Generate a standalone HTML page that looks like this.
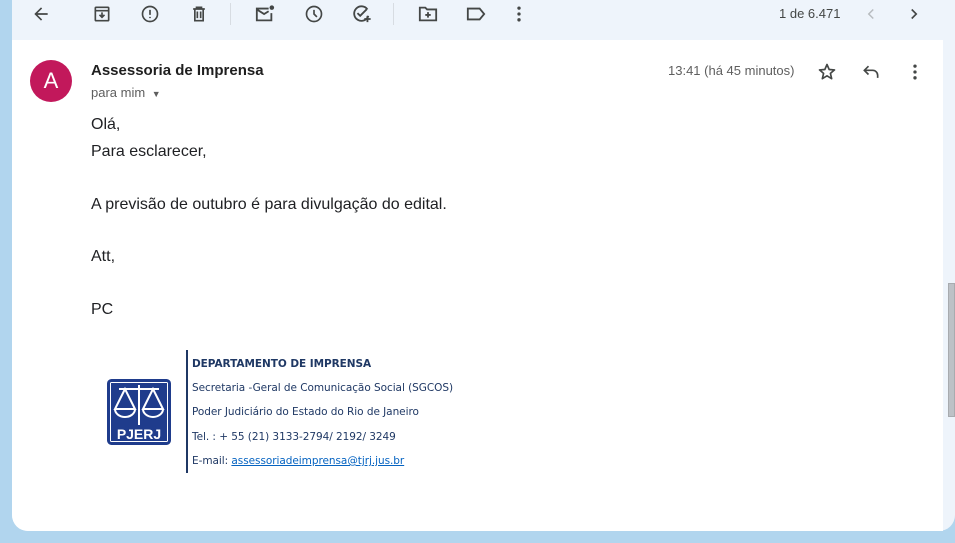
<!DOCTYPE html>
<html><head><meta charset="utf-8"><style>
*{margin:0;padding:0;box-sizing:border-box}
body{width:955px;height:543px;background:#b1d5ee;position:relative;overflow:hidden;font-family:"Liberation Sans",Arial,sans-serif}
#outer{position:absolute;left:12px;top:0;width:943px;height:531px;background:#eef4fb;border-bottom-left-radius:16px;border-bottom-right-radius:16px}
#card{position:absolute;left:12px;top:40px;width:931px;height:491px;background:#fff;border-bottom-left-radius:16px}
.ic{position:absolute;top:3px}
svg{display:block}
#scroll{position:absolute;left:948px;top:283px;width:7px;height:134px;background:#bdc1c6;border:1px solid #a8abaf}
.t{position:absolute;white-space:nowrap}
.b{font-size:16px;color:#202124;left:91px}
.sig{position:absolute;left:192px;font-family:"DejaVu Sans","Liberation Sans",sans-serif;font-size:10.5px;color:#1f3864;letter-spacing:-0.05px}
</style></head><body>
<div id="outer"></div>
<div id="card"></div>
<div id="scroll"></div>
<svg class="ic" style="left:31px;top:4px" width="20" height="20" viewBox="0 0 24 24"><path d="M20 11H7.8l5.6-5.6L12 4l-8 8 8 8 1.4-1.4L7.8 13H20z" fill="#444746"/></svg>
<svg class="ic" style="left:92px;top:4px" width="20" height="20" viewBox="0 0 24 24" fill="none" stroke="#444746" stroke-width="2"><rect x="4" y="4" width="16" height="16" rx="1"/><path d="M4 8h16M12 10v6M9 13l3 3 3-3"/></svg>
<svg class="ic" style="left:140px;top:4px" width="20" height="20" viewBox="0 0 24 24" fill="none" stroke="#444746" stroke-width="2"><circle cx="12" cy="12" r="9"/><path d="M12 7v6M12 15.5v1.5"/></svg>
<svg class="ic" style="left:189px;top:4px" width="20" height="20" viewBox="0 0 24 24" fill="none" stroke="#444746" stroke-width="2"><path d="M5 6h14M9 6V4h6v2M7 6v14h10V6M10 9v8M14 9v8"/></svg>
<div style="position:absolute;left:230px;top:3px;width:1px;height:22px;background:#d7dce2"></div>
<svg class="ic" style="left:254px;top:4px" width="22" height="20" viewBox="0 0 24 22" fill="none" stroke="#444746" stroke-width="2"><path d="M16 5H3v13h16v-8"/><path d="M3 6l8 5 5-3"/><circle cx="19.5" cy="4" r="2.5" fill="#444746" stroke="none"/></svg>
<svg class="ic" style="left:304px;top:4px" width="20" height="20" viewBox="0 0 24 24" fill="none" stroke="#444746" stroke-width="2"><circle cx="12" cy="12" r="9"/><path d="M12 7v5l3.5 3.5"/></svg>
<svg class="ic" style="left:351px;top:4px" width="22" height="20" viewBox="0 0 24 22" fill="none" stroke="#444746" stroke-width="2"><path d="M18 6a8 8 0 1 0 1 7"/><path d="M7 10l3 3 7-7M18 13v7M14.5 16.5h7"/></svg>
<div style="position:absolute;left:393px;top:3px;width:1px;height:22px;background:#d7dce2"></div>
<svg class="ic" style="left:417px;top:4px" width="22" height="20" viewBox="0 0 24 22" fill="none" stroke="#444746" stroke-width="2"><path d="M3 4h6l2 2h10v12H3z"/><path d="M12 9v6M9 12h6"/></svg>
<svg class="ic" style="left:465px;top:4px" width="22" height="20" viewBox="0 0 24 22" fill="none" stroke="#444746" stroke-width="2"><path d="M3 5h13l5 6-5 6H3z"/></svg>
<svg class="ic" style="left:509px;top:4px" width="20" height="20" viewBox="0 0 24 24" fill="#444746"><circle cx="12" cy="5" r="2"/><circle cx="12" cy="12" r="2"/><circle cx="12" cy="19" r="2"/></svg>
<div class="t" style="left:779px;top:6px;font-size:13px;color:#444746">1 de 6.471</div>
<svg class="ic" style="left:862px;top:5px" width="18" height="18" viewBox="0 0 24 24" fill="none" stroke="#b8bcc0" stroke-width="2"><path d="M15 6l-6 6 6 6"/></svg>
<svg class="ic" style="left:905px;top:5px" width="18" height="18" viewBox="0 0 24 24" fill="none" stroke="#444746" stroke-width="2.2"><path d="M9 6l6 6-6 6"/></svg>
<div style="position:absolute;left:30px;top:60px;width:42px;height:42px;border-radius:50%;background:#c2185b;color:#fff;font-size:22px;text-align:center;line-height:42px">A</div>
<div class="t" style="left:91px;top:62px;font-size:15px;font-weight:bold;color:#1f1f1f">Assessoria de Imprensa</div>
<div class="t" style="left:91px;top:85px;font-size:13px;color:#5e5e5e">para mim <span style="font-size:9px;margin-left:3px">▼</span></div>
<div class="t" style="left:668px;top:63px;font-size:13px;color:#5e5e5e">13:41 (há 45 minutos)</div>
<svg class="ic" style="left:817px;top:62px" width="20" height="20" viewBox="0 0 24 24" fill="none" stroke="#444746" stroke-width="2" stroke-linejoin="round"><path d="M12 3l2.6 6 6.4.5-4.9 4.2 1.5 6.3L12 16.6 6.4 20l1.5-6.3L3 9.5 9.4 9z"/></svg>
<svg class="ic" style="left:861px;top:62px" width="20" height="20" viewBox="0 0 24 24" fill="none" stroke="#444746" stroke-width="2"><path d="M9 5L4 10l5 5"/><path d="M4 10h10a6 6 0 0 1 6 6v3"/></svg>
<svg class="ic" style="left:905px;top:62px" width="20" height="20" viewBox="0 0 24 24" fill="#444746"><circle cx="12" cy="5" r="2"/><circle cx="12" cy="12" r="2"/><circle cx="12" cy="19" r="2"/></svg>
<div class="t b" style="top:116px">Olá,</div>
<div class="t b" style="top:143px">Para esclarecer,</div>
<div class="t b" style="top:196px">A previsão de outubro é para divulgação do edital.</div>
<div class="t b" style="top:248px">Att,</div>
<div class="t b" style="top:301px">PC</div>
<svg style="position:absolute;left:107px;top:379px" width="64" height="66" viewBox="0 0 64 66">
<rect x="1.5" y="1.5" width="61" height="63" rx="3" fill="#fff" stroke="#1f3c8c" stroke-width="3"/>
<rect x="4" y="4" width="56" height="44" fill="#1f3c8c"/>
<g stroke="#fff" stroke-width="2" fill="none"><path d="M32 6v40M12 10h40M18 10l-10 20h20zM46 10l-10 20h20z"/><path d="M8 30a10 8 0 0 0 20 0M36 30a10 8 0 0 0 20 0"/></g>
<rect x="4" y="48" width="56" height="14" fill="#1f3c8c"/>
<text x="32" y="60" text-anchor="middle" fill="#fff" font-family="Liberation Sans" font-weight="bold" font-size="14">PJERJ</text>
</svg>
<div style="position:absolute;left:186px;top:350px;width:1.5px;height:123px;background:#1f3864"></div>
<div class="sig" style="top:358px;font-weight:bold">DEPARTAMENTO DE IMPRENSA</div>
<div class="sig" style="top:382px">Secretaria -Geral de Comunicação Social (SGCOS)</div>
<div class="sig" style="top:406px">Poder Judiciário do Estado do Rio de Janeiro</div>
<div class="sig" style="top:431px">Tel. : + 55 (21) 3133-2794/ 2192/ 3249</div>
<div class="sig" style="top:455px">E-mail: <span style="color:#0563c1;text-decoration:underline">assessoriadeimprensa@tjrj.jus.br</span></div>
</body></html>
